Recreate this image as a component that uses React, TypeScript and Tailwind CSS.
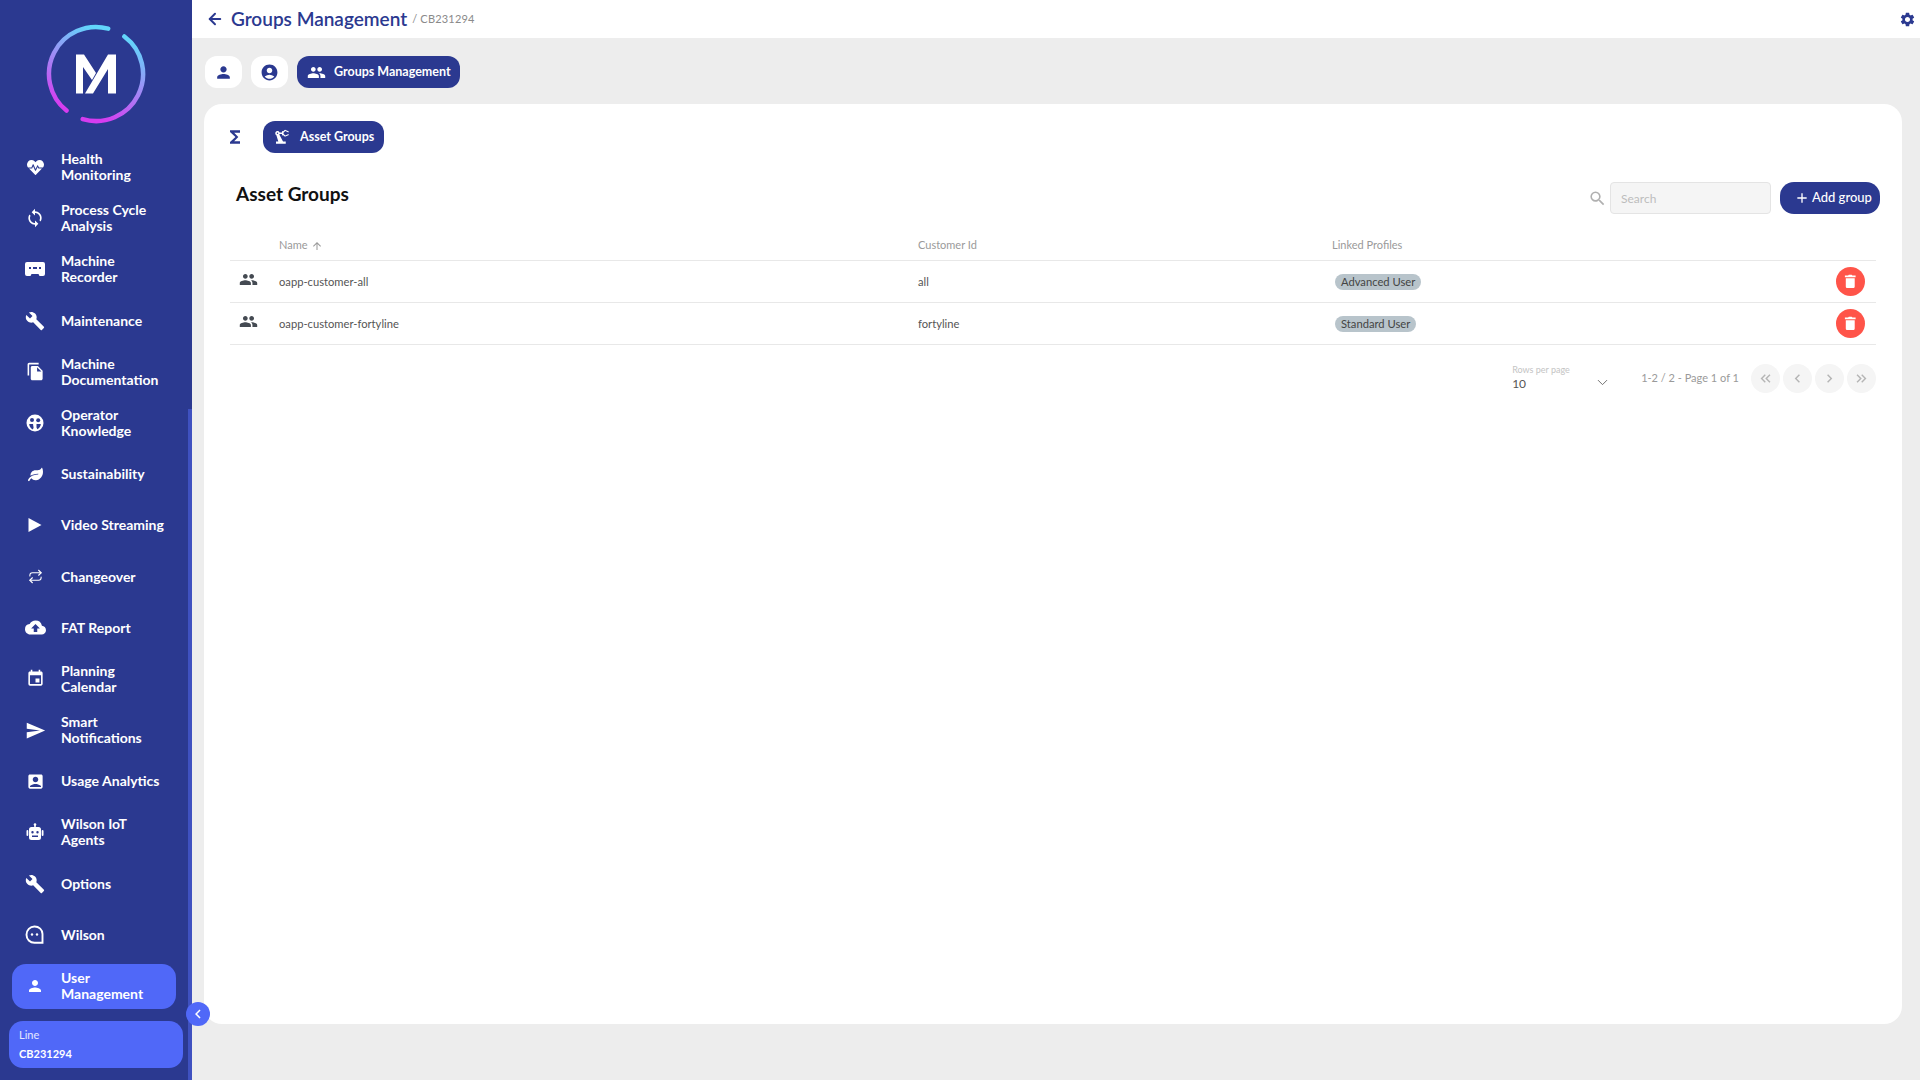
import type { ReactNode } from "react";
import { ArrowLeft, ChevronDown, Repeat } from "lucide-react";
import { FaHeartbeat, FaLeaf } from "react-icons/fa";
import {
  MdAccountBox,
  MdAccountCircle,
  MdAdd,
  MdArrowUpward,
  MdBuild,
  MdChevronLeft,
  MdChevronRight,
  MdCloudUpload,
  MdEvent,
  MdFileCopy,
  MdFunctions,
  MdKeyboardDoubleArrowLeft,
  MdKeyboardDoubleArrowRight,
  MdPeople,
  MdPerson,
  MdPrecisionManufacturing,
  MdSearch,
  MdSend,
  MdSettings,
  MdSync,
} from "react-icons/md";

function RecorderIcon() {
  return (
    <svg width="20" height="14" viewBox="0 0 20 14">
      <path
        fill="white"
        fillRule="evenodd"
        d="M2 0h16a2 2 0 0 1 2 2v10a2 2 0 0 1-2 2h-3.500l-1-2h-7l-1 2H2a2 2 0 0 1-2-2V2a2 2 0 0 1 2-2ZM4 5h2v2H4V5Zm4 0h4v2H8V5Zm6 0h2v2h-2V5Z"
      />
    </svg>
  );
}

function KnowledgeIcon() {
  return (
    <svg width="18" height="18" viewBox="0 0 18 18">
      <circle cx="9" cy="9" r="8.500" fill="white" />
      <circle cx="6" cy="6" r="2" fill="#2b3990" />
      <circle cx="12.200" cy="6.200" r="2" fill="#2b3990" />
      <path d="M3.200 10h3.800l.6 3.800-.8 1.800A7 7 0 0 1 3.200 10Z" fill="#2b3990" />
      <path d="M10.500 10h4.300a6.500 6.500 0 0 1-3.400 5.200l-.9-1.800Z" fill="#2b3990" />
    </svg>
  );
}

function ChatIcon() {
  return (
    <svg width="20" height="19" viewBox="0 0 20 19">
      <path
        fill="none"
        stroke="white"
        strokeWidth="1.900"
        d="M9.500 1.500c4.500 0 8 3.300 8 7.500v8.800h-8c-4.500 0-8-3.500-8-8.100s3.500-8.200 8-8.200Z"
      />
      <circle cx="7" cy="9.500" r="1.200" fill="white" />
      <circle cx="12" cy="9.500" r="1.200" fill="white" />
    </svg>
  );
}

function RobotIcon() {
  return (
    <svg width="18" height="18" viewBox="0 0 18 18">
      <rect x="8.200" y="1" width="1.600" height="3" fill="white" />
      <circle cx="9" cy="1.500" r="1.300" fill="white" />
      <rect x="0.500" y="7" width="1.800" height="6" rx="0.900" fill="white" />
      <rect x="15.700" y="7" width="1.800" height="6" rx="0.900" fill="white" />
      <path
        fill="white"
        fillRule="evenodd"
        d="M5.500 4h7A2.500 2.500 0 0 1 15 6.500v8a2.500 2.500 0 0 1-2.500 2.500h-7A2.500 2.500 0 0 1 3 14.500v-8A2.500 2.500 0 0 1 5.500 4ZM6.500 8a1.200 1.200 0 1 0 0 2.400 1.200 1.200 0 0 0 0-2.400Zm5 0a1.200 1.200 0 1 0 0 2.400 1.200 1.200 0 0 0 0-2.400ZM6 12.500V14h6v-1.500H6Z"
      />
    </svg>
  );
}

function PlayIcon() {
  return (
    <svg width="14" height="14" viewBox="0 0 14 14">
      <path fill="white" d="M0.500 0 13.500 7 0.500 14Z" />
    </svg>
  );
}

function TrashIcon() {
  return (
    <svg width="12.500" height="14.500" viewBox="0 0 14 16">
      <path fill="white" d="M1 1.600h3.600L5.400.6h3.200l.8 1h3.600v2H1v-2ZM2 4.600h10v9.200c0 1-.8 1.800-1.800 1.800H3.800C2.800 15.600 2 14.800 2 13.800V4.600Z" />
    </svg>
  );
}

function Logo() {
  return (
    <svg width="102" height="102" viewBox="0 0 102 102">
      <defs>
        <linearGradient id="ring" x1="0.7" y1="0" x2="0.35" y2="1">
          <stop offset="0" stopColor="#62d6fb" />
          <stop offset="0.5" stopColor="#a08af5" />
          <stop offset="1" stopColor="#d63cf0" />
        </linearGradient>
      </defs>
      <path d="M63.160 5.600A47 47 0 0 0 21.500 87.600" fill="none" stroke="url(#ring)" strokeWidth="4.500" strokeLinecap="round" />
      <path d="M79.350 13.500A47 47 0 0 1 37.700 96.100" fill="none" stroke="url(#ring)" strokeWidth="4.500" strokeLinecap="round" />
      <path fill="white" d="M31 31.500h8L51 50l-4 7-9-13v26.500h-7Z" />
      <path fill="white" d="M63 31.500h8v39h-8V46L48 70.500h-8Z" />
    </svg>
  );
}

type NavItem = { label: ReactNode; icon: ReactNode; active?: boolean };

const NAV: NavItem[] = [
  { label: <>Health<br />Monitoring</>, icon: <FaHeartbeat size={17} /> },
  { label: <>Process Cycle<br />Analysis</>, icon: <MdSync size={20} /> },
  { label: <>Machine<br />Recorder</>, icon: <RecorderIcon /> },
  { label: "Maintenance", icon: <MdBuild size={20} /> },
  { label: <>Machine<br />Documentation</>, icon: <MdFileCopy size={19} /> },
  { label: <>Operator<br />Knowledge</>, icon: <KnowledgeIcon /> },
  { label: "Sustainability", icon: <FaLeaf size={15} /> },
  { label: "Video Streaming", icon: <PlayIcon /> },
  { label: "Changeover", icon: <Repeat size={15} strokeWidth={1.7} /> },
  { label: "FAT Report", icon: <MdCloudUpload size={21} /> },
  { label: <>Planning<br />Calendar</>, icon: <MdEvent size={19} /> },
  { label: <>Smart<br />Notifications</>, icon: <MdSend size={21} /> },
  { label: "Usage Analytics", icon: <MdAccountBox size={19} /> },
  { label: <>Wilson IoT<br />Agents</>, icon: <RobotIcon /> },
  { label: "Options", icon: <MdBuild size={20} /> },
  { label: "Wilson", icon: <ChatIcon /> },
  { label: <>User<br />Management</>, icon: <MdPerson size={18} />, active: true },
];

const ROWS = [
  { name: "oapp-customer-all", id: "all", profile: "Advanced User" },
  { name: "oapp-customer-fortyline", id: "fortyline", profile: "Standard User" },
];

function Sidebar() {
  return (
    <aside className="relative flex h-full w-[192px] flex-none flex-col bg-[#2b3990] text-white">
      <div className="flex h-[144.500px] flex-none items-start justify-center pt-[23px]">
        <Logo />
      </div>
      <nav className="flex flex-col gap-[6.200px] px-[12px]">
        {NAV.map((item, i) => (
          <div
            key={i}
            className={`flex h-[45px] w-[164px] items-center rounded-[14px] ${item.active ? "bg-[#5068f8]" : ""}`}
          >
            <span className="flex w-[46px] flex-none items-center justify-center">{item.icon}</span>
            <span className="pl-[3px] text-[14px] leading-[16px] font-bold">{item.label}</span>
          </div>
        ))}
      </nav>
      <div className="mx-[9px] mt-[12px] flex h-[47px] w-[174px] flex-col justify-center rounded-[14px] bg-[#5068f8] pl-[10px] font-bold">
        <span className="text-[11px] leading-[14px] font-normal text-white/85">Line</span>
        <span className="mt-[5px] text-[11px] leading-[14px]">CB231294</span>
      </div>
      {/* scrollbar thumb */}
      <div className="absolute top-[409px] right-0 bottom-0 w-[4px] bg-[#3f51c0]" />
      <button className="absolute top-[1002px] left-[186px] z-10 flex h-[24px] w-[24px] items-center justify-center rounded-full bg-[#5068f8] text-white">
        <MdChevronLeft size={18} />
      </button>
    </aside>
  );
}

function Pager({ children }: { children: ReactNode }) {
  return (
    <span className="flex h-[29px] w-[29px] items-center justify-center rounded-full bg-[#f5f5f5] text-[#b5b5b5]">
      {children}
    </span>
  );
}

function Table() {
  return (
    <div className="mt-[15px] mr-[26px] ml-[26px]">
      <div className="flex h-[32px] items-center border-b border-[#e8e8e8] pt-[2px] text-[11px] text-[#9a9a9a]">
        <span className="flex w-[49px] flex-none" />
        <span className="flex w-[639px] flex-none items-center gap-[3px]">
          Name <MdArrowUpward size={12} />
        </span>
        <span className="w-[414px] flex-none">Customer Id</span>
        <span>Linked Profiles</span>
      </div>
      {ROWS.map((row) => (
        <div key={row.name} className="flex h-[42px] items-center border-b border-[#e8e8e8] text-[11.200px] text-[#555555]">
          <span className="flex w-[49px] flex-none justify-center pr-[12px] pb-[5px] text-[#444a52]">
            <MdPeople size={19} />
          </span>
          <span className="w-[639px] flex-none pt-[1px]">{row.name}</span>
          <span className="w-[414px] flex-none pt-[1px]">{row.id}</span>
          <span className="ml-[3px] rounded-full bg-[#b8c4cb] px-[6px] py-[1px] text-[11.200px] leading-[14px] text-[#444444]">
            {row.profile}
          </span>
          <span className="mr-[11px] ml-auto flex h-[29px] w-[29px] items-center justify-center rounded-full bg-[#ff5449]">
            <TrashIcon />
          </span>
        </div>
      ))}
      <div className="mt-[19px] flex items-center justify-end">
        <div className="relative mr-[30px] w-[99px] pb-[2px]">
          <div className="text-[9px] leading-[10px] text-[#c4c4c4]">Rows per page</div>
          <div className="mt-[2px] text-[12px] leading-[14px] text-[#555555]">10</div>
          <ChevronDown size={17} strokeWidth={1.3} className="absolute top-[9px] right-0 text-[#666666]" />
        </div>
        <span className="mr-[12px] text-[11px] text-[#9a9a9a]">1-2 / 2 - Page 1 of 1</span>
        <div className="flex gap-[3px]">
          <Pager><MdKeyboardDoubleArrowLeft size={17} /></Pager>
          <Pager><MdChevronLeft size={17} /></Pager>
          <Pager><MdChevronRight size={17} /></Pager>
          <Pager><MdKeyboardDoubleArrowRight size={17} /></Pager>
        </div>
      </div>
    </div>
  );
}

export default function App() {
  return (
    <div className="flex h-[1080px] w-[1920px] overflow-hidden bg-[#ededed] font-['Lato','Liberation_Sans',sans-serif]">
      <Sidebar />
      <main className="flex min-w-0 flex-1 flex-col">
        <header className="flex h-[38px] flex-none items-center bg-white pl-[14px] text-[#2b3990]">
          <ArrowLeft size={18} strokeWidth={2.6} />
          <h1 className="ml-[7px] text-[19px] leading-[24px] font-semibold">Groups Management</h1>
          <span className="mt-[1px] ml-[5px] text-[11px] tracking-[0.2px] text-[#8a8a8a]">/ CB231294</span>
          <MdSettings size={17} className="mr-[4px] ml-auto" />
        </header>

        <div className="flex gap-[9px] pt-[18px] pl-[13px]">
          <span className="flex h-[32px] w-[37px] items-center justify-center rounded-[12px] bg-white text-[#2b3990]">
            <MdPerson size={19} />
          </span>
          <span className="flex h-[32px] w-[37px] items-center justify-center rounded-[12px] bg-white text-[#2b3990]">
            <MdAccountCircle size={19} />
          </span>
          <span className="flex h-[32px] w-[163px] items-center rounded-[12px] bg-[#2b3990] pl-[10px] text-[12.500px] font-bold text-white">
            <MdPeople size={19} />
            <span className="ml-[8px]">Groups Management</span>
          </span>
        </div>

        <section className="mt-[16px] mr-[18px] ml-[12px] h-[920px] rounded-[18px] bg-white">
          <div className="flex items-center pt-[17px] pl-[21px]">
            <MdFunctions size={20} className="text-[#2b3990]" />
            <span className="ml-[18px] flex h-[32px] w-[121px] items-center rounded-[12px] bg-[#2b3990] pl-[10px] text-[12.500px] font-bold text-white">
              <MdPrecisionManufacturing size={18} />
              <span className="ml-[9px]">Asset Groups</span>
            </span>
          </div>

          <div className="mt-[29px] flex items-center pr-[22px] pl-[32px]">
            <h2 className="self-start text-[19px] leading-[24px] font-bold text-[#111111]">Asset Groups</h2>
            <MdSearch size={19} className="mr-[3px] ml-auto text-[#b0b0b0]" />
            <input
              placeholder="Search"
              readOnly
              className="h-[32px] w-[161px] rounded-[4px] border border-[#e4e4e4] bg-[#f5f5f5] pl-[10px] text-[12px] placeholder:text-[#bdbdbd]"
            />
            <span className="ml-[9px] flex h-[32px] w-[100px] items-center rounded-[14px] bg-[#2b3990] pl-[14px] text-[13px] font-medium text-white">
              <MdAdd size={16} />
              <span className="ml-[2px]">Add group</span>
            </span>
          </div>

          <Table />
        </section>
      </main>
    </div>
  );
}
